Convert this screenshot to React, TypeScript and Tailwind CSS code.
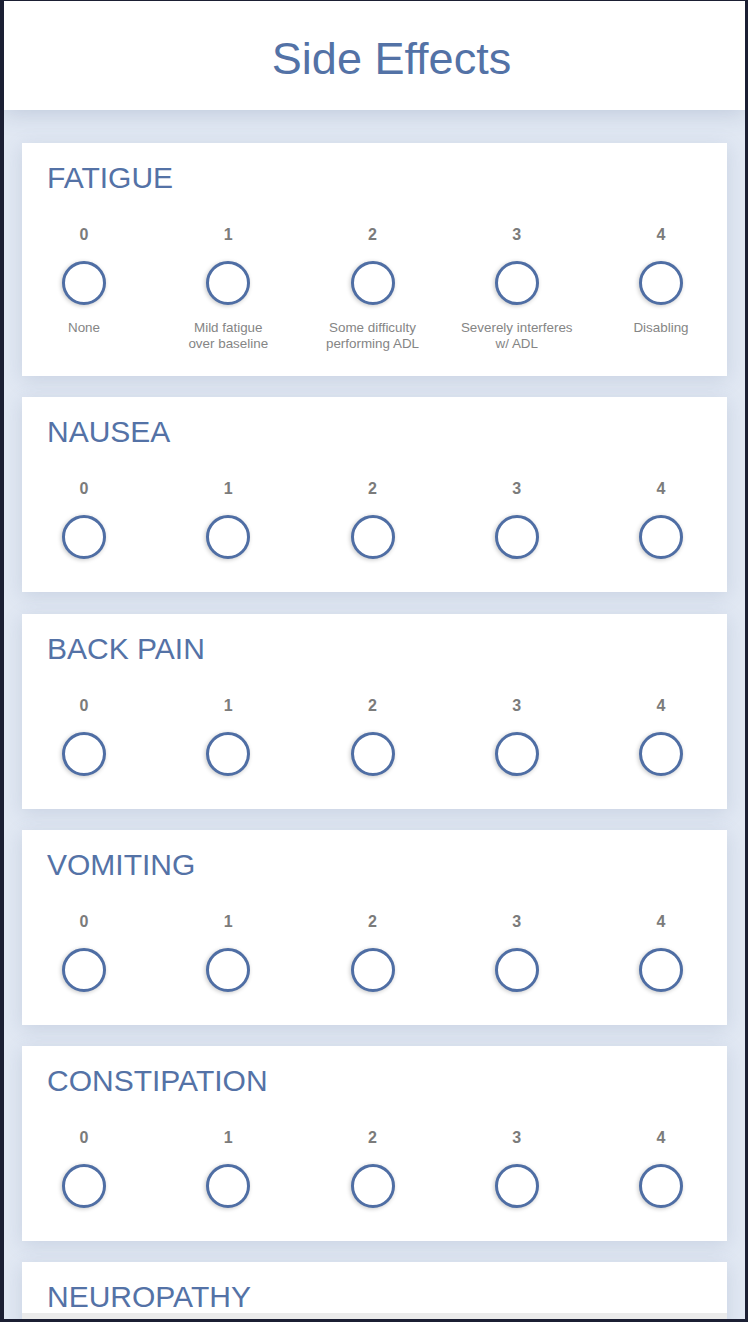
import React from "react";

const font = { fontFamily: '"Liberation Sans", Arial, Helvetica, sans-serif' };

type Effect = { name: string; labels?: string[][] };

const effects: Effect[] = [
  {
    name: "FATIGUE",
    labels: [
      ["None"],
      ["Mild fatigue", "over baseline"],
      ["Some difficulty", "performing ADL"],
      ["Severely interferes", "w/ ADL"],
      ["Disabling"],
    ],
  },
  { name: "NAUSEA" },
  { name: "BACK PAIN" },
  { name: "VOMITING" },
  { name: "CONSTIPATION" },
];

function Card({ effect }: { effect: Effect }) {
  return (
    <div
      className={
        "bg-white shadow-[0_4px_18px_rgba(90,110,150,0.18)] pl-[25px] pr-[30px] pt-[18px] " +
        (effect.labels ? "pb-[24px]" : "pb-[33px]")
      }
    >
      <div className="text-[30px] leading-[33px] text-[#5472a6]">{effect.name}</div>
      <div className="mt-[32px] flex justify-between">
        {[0, 1, 2, 3, 4].map((n) => (
          <div key={n} className={"w-[72px] flex flex-col items-center " + (n === 0 ? "ml-[1px]" : "")}>
            <div className="text-[16px] leading-[18px] font-bold text-[#7b7b7b]">{n}</div>
            <div className="mt-[17px] w-[44px] h-[44px] rounded-full border-[3px] border-[#4f6ea4] bg-white shadow-[-1px_1px_4px_rgba(0,0,0,0.22)]" />
            {effect.labels && (
              <div className="mt-[15px] w-[150px] text-center text-[13.4px] leading-[16px] text-[#858585]">
                {effect.labels[n].map((l, i) => (
                  <div key={i}>{l}</div>
                ))}
              </div>
            )}
          </div>
        ))}
      </div>
    </div>
  );
}

export default function App() {
  return (
    <div className="w-[748px] h-[1322px] bg-[#1b1f33] pt-[1px] pl-[4px]" style={font}>
      <div className="w-[741px] h-[1318px] overflow-hidden bg-[#e1e8f3] flex flex-col">
        <div className="relative z-10 h-[109px] shrink-0 bg-white flex items-center justify-center pl-[34px] shadow-[0_3px_22px_rgba(70,90,130,0.22)]">
          <div className="text-[45px] leading-[50px] text-[#5372a6] mt-[6px]">Side Effects</div>
        </div>
        <div className="px-[18px] pt-[33px] flex flex-col gap-[21.25px]">
          {effects.map((e) => (
            <Card key={e.name} effect={e} />
          ))}
          <div className="bg-white shadow-[0_4px_18px_rgba(90,110,150,0.18)] pl-[25px] pt-[18px]">
            <div className="text-[30px] leading-[33px] text-[#5472a6]">NEUROPATHY</div>
            <div className="-ml-[25px] mt-[0px] h-[20px] bg-[#ebebeb]" />
          </div>
        </div>
      </div>
    </div>
  );
}
